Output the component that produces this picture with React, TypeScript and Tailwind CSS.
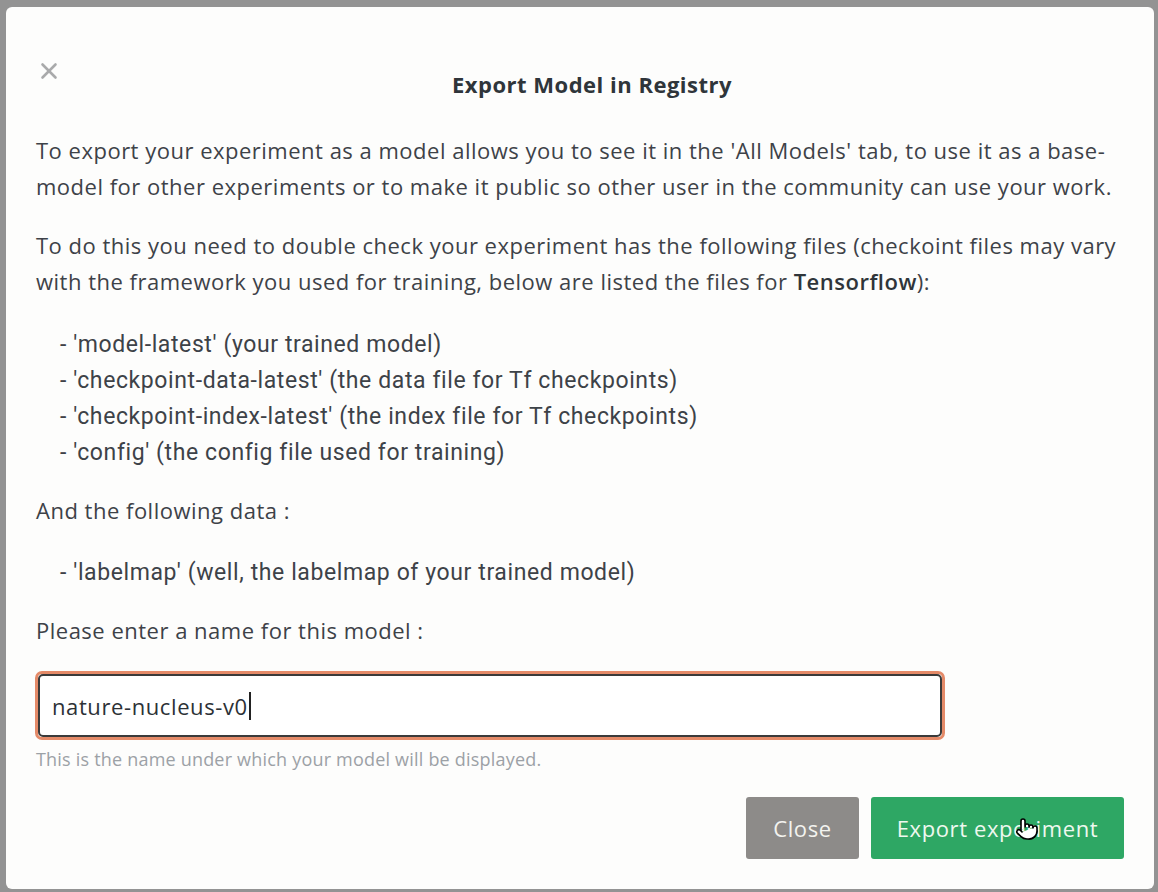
import { Pointer, X } from "lucide-react";

const FILES = [
  "- 'model-latest' (your trained model)",
  "- 'checkpoint-data-latest' (the data file for Tf checkpoints)",
  "- 'checkpoint-index-latest' (the index file for Tf checkpoints)",
  "- 'config' (the config file used for training)",
];

export default function App() {
  return (
    <div className="h-[892px] w-[1158px] overflow-hidden bg-[#939393] pt-[7px] pl-[6px] font-['Open_Sans',sans-serif]">
      <div className="flex h-[882px] w-[1148px] flex-col rounded-md bg-[#fdfdfc] pt-[51px] pl-[30px] pr-[30px] text-[22px] leading-[36px] tracking-[0.5px] text-[#3d4248]">
        {/* header */}
        <div className="grid grid-cols-[1fr_auto_1fr]">
          <button type="button" className="self-start justify-self-start text-[#a9aaab]">
            <X size={26} strokeWidth={2.4} />
          </button>
          <h2 className="mt-[8px] ml-[24px] text-[22px] font-bold text-[#2f353a]">Export Model in Registry</h2>
          <div />
        </div>

        <p className="mt-[30px] whitespace-nowrap">
          To export your experiment as a model allows you to see it in the 'All Models' tab, to use it as a base-
          <br />
          model for other experiments or to make it public so other user in the community can use your work.
        </p>

        <p className="mt-[23px] whitespace-nowrap">
          To do this you need to double check your experiment has the following files (checkoint files may vary
          <br />
          with the framework you used for training, below are listed the files for <b className="font-semibold text-[#2f353a]">Tensorflow</b>):
        </p>

        <ul className="mt-[28px] pl-[24px] font-['Roboto',sans-serif] text-[23px] tracking-[0.6px]">
          {FILES.map((f) => (
            <li key={f}>{f}</li>
          ))}
        </ul>

        <p className="mt-[21px]">And the following data :</p>

        <ul className="mt-[27px] pl-[24px] font-['Roboto',sans-serif] text-[23px] tracking-[0.6px]">
          <li>- 'labelmap' (well, the labelmap of your trained model)</li>
        </ul>

        <p className="mt-[21px]">Please enter a name for this model :</p>

        <div className="-ml-[1px] mt-[23px] w-[910px] rounded-[7px] border-[3px] border-[#e48a68]">
          <div className="flex h-[63px] items-center rounded-[5px] border-2 border-[#3a3a3a] bg-white pl-[12px] text-[22px] tracking-[0.6px] text-[#2c3136]">
            nature-nucleus-v0<span className="ml-[1px] inline-block h-[28px] w-[2px] bg-[#222]" />
          </div>
        </div>

        <p className="mt-[9px] text-[18px] leading-[20px] tracking-[0.2px] text-[#9ca1a6]">This is the name under which your model will be displayed.</p>

        <div className="mt-[28px] flex justify-end gap-[12px]">
          <button type="button" className="h-[62px] w-[113px] rounded-[3px] bg-[#8d8b89] text-[22px] tracking-[0.6px] text-[#f3f3ef]">
            Close
          </button>
          <button type="button" className="relative h-[62px] w-[253px] rounded-[3px] bg-[#2ea764] text-[22px] tracking-[0.6px] text-[#eef8ef]">
            Export experiment
            <Pointer size={24} strokeWidth={1.6} className="absolute left-[144px] top-[20px] fill-white text-black" />
          </button>
        </div>
      </div>
    </div>
  );
}
